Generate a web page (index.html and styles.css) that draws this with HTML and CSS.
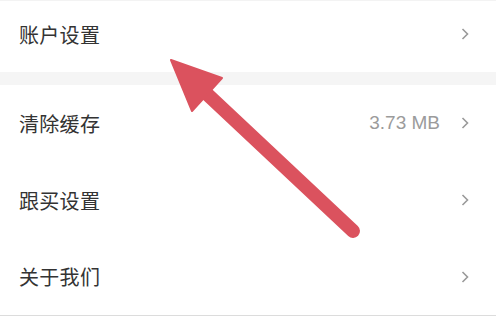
FILE: index.html
```html
<!DOCTYPE html>
<html lang="zh-CN">
<head>
<meta charset="utf-8">
<link rel="stylesheet" href="styles.css">
</head>
<body>
<div class="page">
  <div class="group first">
    <div class="row"><span class="label">账户设置</span><span class="right"><svg class="chev" viewBox="0 0 8 12" width="8" height="12"><path d="M1.5 1 L6.5 6 L1.5 11" fill="none" stroke="#9a9a9a" stroke-width="1.6"/></svg></span></div>
  </div>
  <div class="gap"></div>
  <div class="group">
    <div class="row"><span class="label">清除缓存</span><span class="right"><span class="value">3.73 MB</span><svg class="chev" viewBox="0 0 8 12" width="8" height="12"><path d="M1.5 1 L6.5 6 L1.5 11" fill="none" stroke="#9a9a9a" stroke-width="1.6"/></svg></span></div>
    <div class="row"><span class="label">跟买设置</span><span class="right"><svg class="chev" viewBox="0 0 8 12" width="8" height="12"><path d="M1.5 1 L6.5 6 L1.5 11" fill="none" stroke="#9a9a9a" stroke-width="1.6"/></svg></span></div>
    <div class="row last"><span class="label">关于我们</span><span class="right"><svg class="chev" viewBox="0 0 8 12" width="8" height="12"><path d="M1.5 1 L6.5 6 L1.5 11" fill="none" stroke="#9a9a9a" stroke-width="1.6"/></svg></span></div>
  </div>
  <svg class="arrow" viewBox="0 0 496 318" width="496" height="318">
    <line x1="207" y1="94" x2="353" y2="231" stroke="#db525e" stroke-width="14" stroke-linecap="round"/>
    <polygon points="171,60 222,78 192,111" fill="#db525e" stroke="#db525e" stroke-width="2" stroke-linejoin="round"/>
  </svg>
</div>
</body>
</html>
```
FILE: styles.css
```css
html, body {
  margin: 0;
  padding: 0;
  background: #ffffff;
}
.page {
  position: relative;
  width: 496px;
  height: 318px;
  overflow: hidden;
  font-family: "Noto Sans CJK SC", "Noto Sans", sans-serif;
}
.group.first {
  border-top: 1px solid #f3f3f3;
}
.group.first .row {
  height: 71px;
  padding-top: 0;
  padding-bottom: 5px;
}
.gap {
  height: 13px;
  background: #f5f5f5;
}
.row {
  height: 77px;
  display: flex;
  align-items: center;
  justify-content: space-between;
  padding: 0 27px 1px 19px;
  box-sizing: border-box;
}
.row.last {
  border-bottom: 1px solid #dcdcdc;
}
.label {
  font-size: 20px;
  color: #333333;
  letter-spacing: 0.3px;
}
.right {
  display: flex;
  align-items: center;
  gap: 21px;
}
.value {
  font-family: "Liberation Sans", Arial, sans-serif;
  font-size: 19px;
  color: #9b9b9b;
}
.chev {
  display: block;
}
.arrow {
  position: absolute;
  left: 0;
  top: 0;
  pointer-events: none;
}
```
